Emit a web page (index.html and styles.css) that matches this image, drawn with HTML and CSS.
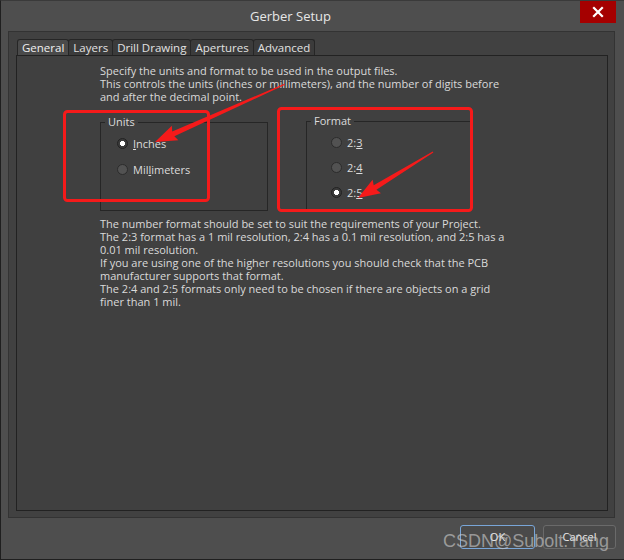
FILE: index.html
```html
<!DOCTYPE html>
<html>
<head>
<meta charset="utf-8">
<link rel="stylesheet" href="styles.css">
</head>
<body>
<div class="window">
  <div class="titlebar">
    <div class="title">Gerber Setup</div>
    <div class="close">
      <svg width="12" height="12" viewBox="0 0 12 12"><path d="M2 2L10 10M10 2L2 10" stroke="#fff" stroke-width="2.2" stroke-linecap="square"/></svg>
    </div>
  </div>
  <div class="frame">
    <div class="tabs">
      <div class="tab active">General</div>
      <div class="tab">Layers</div>
      <div class="tab">Drill Drawing</div>
      <div class="tab">Apertures</div>
      <div class="tab">Advanced</div>
    </div>
    <div class="page">
      <p class="text">Specify the units and format to be used in the output files.<br>This controls the units (inches or millimeters), and the number of digits before<br>and after the decimal point.</p>
      <div class="groups">
        <fieldset class="group units">
          <legend>Units</legend>
          <div class="options">
            <div class="radio"><span class="dot checked"></span><span><u>I</u>nches</span></div>
            <div class="radio"><span class="dot"></span><span>Mil<u>l</u>imeters</span></div>
          </div>
        </fieldset>
        <fieldset class="group format">
          <legend>Format</legend>
          <div class="options">
            <div class="radio"><span class="dot"></span><span>2:<u>3</u></span></div>
            <div class="radio"><span class="dot"></span><span>2:<u>4</u></span></div>
            <div class="radio"><span class="dot checked"></span><span>2:<u>5</u></span></div>
          </div>
        </fieldset>
      </div>
      <p class="text notes">The number format should be set to suit the requirements of your Project.<br>The 2:3 format has a 1 mil resolution, 2:4 has a 0.1 mil resolution, and 2:5 has a<br>0.01 mil resolution.<br>If you are using one of the higher resolutions you should check that the PCB<br>manufacturer supports that format.<br>The 2:4 and 2:5 formats only need to be chosen if there are objects on a grid<br>finer than 1 mil.</p>
    </div>
  </div>
  <div class="buttons">
    <div class="btn ok">OK</div>
    <div class="btn">Cancel</div>
  </div>
  <svg class="annot" width="624" height="560" viewBox="0 0 624 560">
    <rect x="64.5" y="111.5" width="144" height="89" rx="3" fill="none" stroke="#f51a1a" stroke-width="3"/>
    <rect x="278.5" y="108.5" width="193" height="102" rx="3" fill="none" stroke="#f51a1a" stroke-width="3"/>
    <polygon transform="translate(155 142) rotate(-24)" points="0,0 22,-8 20,-2.6 142,-0.6 142,0.6 20,2.6 22,8" fill="#f51a1a"/>
    <polygon transform="translate(358 198) rotate(-31.5)" points="0,0 22,-8 20,-2.6 88,-0.6 88,0.6 20,2.6 22,8" fill="#f51a1a"/>
  </svg>
  <div class="watermark">CSDN@Subolt.Yang</div>
</div>
</body>
</html>
```
FILE: styles.css
```css
* { box-sizing: border-box; }
html, body { margin: 0; padding: 0; background: #4e4e4e; }
body { font-family: "Open Sans", "Noto Sans", sans-serif; color: #dcdcdc; }

.window {
  position: relative;
  width: 624px;
  height: 560px;
  background: #4e4e4e;
  border-left: 1px solid #1f1f1f;
  border-bottom: 1px solid #1f1f1f;
  border-top: 1px solid #3a3a3a;
  overflow: hidden;
}

.titlebar {
  display: flex;
  align-items: flex-start;
  height: 30px;
}
.title {
  flex: 1;
  text-align: center;
  font-size: 13px;
  line-height: 30px;
  color: #e6e6e6;
}
.close {
  width: 36px;
  height: 22px;
  margin-right: 8px;
  background: #a50000;
  display: flex;
  align-items: center;
  justify-content: center;
}

.frame {
  margin-left: 7px;
  width: 607px;
  height: 487px;
  background: #414141;
  border: 1px solid #333;
  padding: 7px 6px 6px 7px;
  display: flex;
  flex-direction: column;
}

.tabs {
  display: flex;
  height: 16px;
  margin-left: 1px;
}
.tab {
  font-size: 11.5px;
  line-height: 15px;
  padding: 0 4px;
  color: #e2e2e2;
  background: #3b3b3b;
  border: 1px solid #262626;
  border-bottom: none;
  border-radius: 3px 3px 0 0;
  margin-right: -1px;
}
.tab.active {
  background: #4a4a4a;
  color: #f0f0f0;
}

.page {
  flex: 1;
  background: #404040;
  border: 1px solid #222;
  padding: 8px 0 0 83px;
}

.text {
  margin: 0;
  font-size: 11px;
  line-height: 13px;
  color: #dadada;
}

.groups {
  display: flex;
  gap: 38px;
  margin-top: 12px;
}
.group {
  margin: 0;
  height: 96px;
  border: 1px solid #262626;
  padding: 0;
  min-width: 0;
}
.group legend {
  font-size: 11px;
  line-height: 14px;
  padding: 0 3px;
  margin-left: 4px;
  color: #dcdcdc;
}
.units { width: 168px; }
.units .options { padding: 1px 0 0 16px; }
.format { width: 165px; margin-top: -1px; }
.format .options { padding: 2px 0 0 24px; }

.radio {
  display: flex;
  align-items: center;
  gap: 5px;
  height: 26px;
  font-size: 11px;
  color: #dcdcdc;
}
.format .radio { height: 25px; }

.dot {
  width: 11px;
  height: 11px;
  border-radius: 50%;
  background: #525252;
  border: 1px solid #2c2c2c;
}
.dot.checked {
  background: radial-gradient(circle, #ffffff 0 2.3px, #3a3a3a 2.8px);
  border-color: #222;
}

.notes { margin-top: 6px; }

.buttons {
  display: flex;
  justify-content: flex-end;
  gap: 8px;
  padding: 7px 8px 0 0;
}
.btn {
  width: 73px;
  height: 24px;
  border: 1px solid #6a6a6a;
  border-radius: 3px;
  background: #4a4a4a;
  font-size: 11px;
  line-height: 22px;
  text-align: center;
  color: #eaeaea;
}
.btn.ok {
  width: 75px;
  border-color: #79a6d8;
}

.annot {
  position: absolute;
  left: -1px;
  top: -1px;
  pointer-events: none;
}

.watermark {
  position: absolute;
  left: 442px;
  top: 531px;
  font-family: "Liberation Sans", Arial, sans-serif;
  font-size: 18px;
  line-height: 18px;
  color: rgba(205, 205, 205, 0.62);
  white-space: nowrap;
}
```
